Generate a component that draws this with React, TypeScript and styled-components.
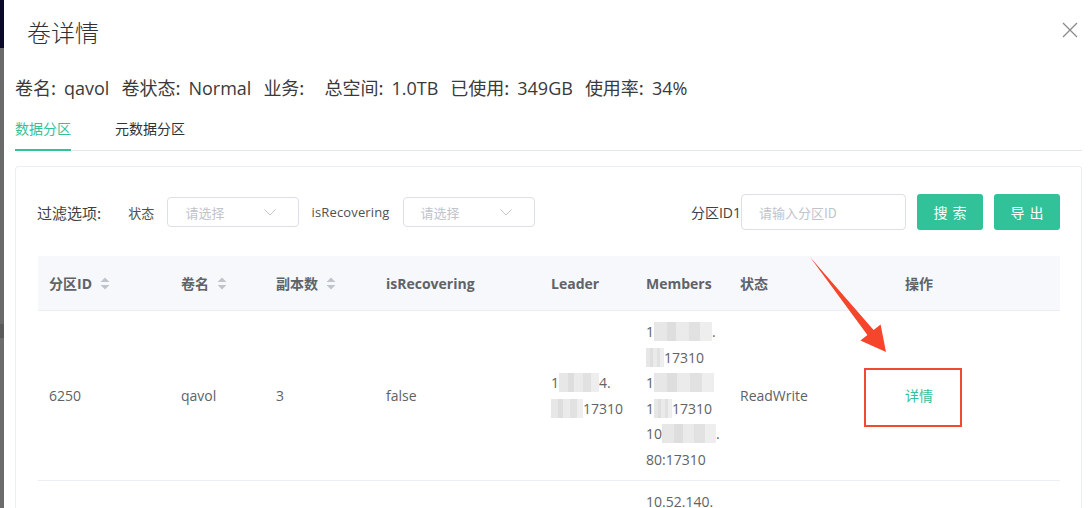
import React from "react";
import styled, { createGlobalStyle } from "styled-components";

const GREEN = "#31c29a";

const GlobalStyle = createGlobalStyle`
  html, body { margin: 0; padding: 0; background: #fff; }
  body {
    font-family: "Open Sans", "Noto Sans CJK SC", sans-serif;
    color: #606266;
  }
  * { box-sizing: border-box; }
`;

const Page = styled.div`
  position: relative;
  display: flex;
  width: 1089px;
  height: 508px;
  overflow: hidden;
`;

const Backdrop = styled.div`
  width: 4px;
  flex-shrink: 0;
  display: flex;
  flex-direction: column;
`;

const BackdropTop = styled.div`
  height: 48px;
  background: #0b0a26;
`;

const BackdropBottom = styled.div`
  flex: 1;
  background: linear-gradient(180deg, #6a6a6a 0 60%, #5a5a5a 60% 63%, #6c6c6c 63%);
`;

const Modal = styled.div`
  flex: 1;
  background: #fff;
  padding: 0 7px 0 11px;
  display: flex;
  flex-direction: column;
  & > * { flex-shrink: 0; }
`;

const ModalHeader = styled.div`
  height: 64px;
  display: flex;
  align-items: center;
  justify-content: space-between;
  padding: 0 4px 2px 12px;
`;

const Title = styled.div`
  font-family: "Noto Sans CJK SC", sans-serif;
  font-size: 24px;
  color: #303133;
  font-weight: 300;
`;

const CloseButton = styled.div`
  width: 16px;
  height: 16px;
  display: flex;
  margin-top: -2px;
`;

const InfoLine = styled.div`
  margin-top: 11px;
  line-height: 24px;
  font-size: 18px;
  color: #3a3a3a;
  display: flex;
  white-space: nowrap;
`;

const InfoItem = styled.span`
  margin-right: 12px;
`;

const InfoLabel = styled.span`
  font-family: "Noto Sans CJK SC", sans-serif;
`;

const InfoValue = styled.span`
  margin-left: 8px;
`;

const Tabs = styled.div`
  margin-top: 11px;
  display: flex;
  gap: 44px;
  border-bottom: 1px solid #e4e7ed;
`;

const Tab = styled.div<{ $active?: boolean }>`
  font-family: "Noto Sans CJK SC", sans-serif;
  font-size: 14px;
  line-height: 35px;
  padding-bottom: 3px;
  margin-bottom: -1px;
  color: ${(p) => (p.$active ? GREEN : "#303133")};
  border-bottom: 2px solid ${(p) => (p.$active ? GREEN : "transparent")};
`;

const Card = styled.div`
  margin-top: 15px;
  height: 400px;
  border: 1px solid #ebeef5;
  border-bottom: none;
  border-radius: 4px 4px 0 0;
  padding: 27px 21px 0 22px;
`;

const FilterBar = styled.div`
  display: flex;
  align-items: center;
  justify-content: space-between;
  height: 36px;
  margin-left: -1px;
`;

const FilterGroup = styled.div`
  display: flex;
  align-items: center;
`;

const FilterTitle = styled.span`
  font-family: "Noto Sans CJK SC", sans-serif;
  font-size: 15px;
  color: #404040;
  margin-right: 27px;
`;

const FilterLabel = styled.span`
  font-size: 13px;
  letter-spacing: 0.15px;
  color: #505050;
  margin-right: 13px;
`;

const Select = styled.div`
  width: 132px;
  height: 30px;
  border: 1px solid #dcdfe6;
  border-radius: 4px;
  display: flex;
  align-items: center;
  justify-content: space-between;
  padding: 0 22px 0 17px;
  margin-right: 12px;
`;

const Placeholder = styled.span`
  font-family: "Noto Sans CJK SC", sans-serif;
  font-size: 13px;
  color: #c0c4cc;
`;

const SearchGroup = styled.div`
  display: flex;
  align-items: center;
`;

const SearchLabel = styled.span`
  font-size: 14px;
  color: #404040;
`;

const Input = styled.div`
  width: 165px;
  height: 36px;
  border: 1px solid #dcdfe6;
  border-radius: 4px;
  display: flex;
  align-items: center;
  padding-left: 17px;
  margin-right: 11px;
`;

const Button = styled.div`
  height: 36px;
  width: 66px;
  border-radius: 3px;
  background: ${GREEN};
  color: #fff;
  font-family: "Noto Sans CJK SC", sans-serif;
  font-size: 14px;
  letter-spacing: 5px;
  padding-left: 5px;
  display: flex;
  align-items: center;
  justify-content: center;
  & + & {
    margin-left: 11px;
  }
`;

const Table = styled.div`
  margin-top: 26px;
  display: grid;
  grid-template-columns: 132px 95px 110px 165px 95px 94px 100px 180px 1fr;
`;

const HeadCell = styled.div<{ $center?: boolean }>`
  height: 55px;
  background: #f7f8fc;
  border-bottom: 1px solid #ebeef5;
  display: flex;
  align-items: center;
  justify-content: ${(p) => (p.$center ? "center" : "flex-start")};
  padding-left: ${(p) => (p.$center ? "0" : "11px")};
  font-size: 14px;
  font-weight: 700;
  color: #5f6368;
  white-space: nowrap;
  gap: 8px;
`;

const Cell = styled.div<{ $center?: boolean }>`
  border-bottom: 1px solid #ebeef5;
  display: flex;
  align-items: center;
  justify-content: ${(p) => (p.$center ? "center" : "flex-start")};
  padding: 8px 0 8px ${(p) => (p.$center ? "0" : "11px")};
  font-size: 14px;
  line-height: 25.5px;
  color: #606266;
  white-space: nowrap;
`;

const Lines = styled.div`
  display: flex;
  flex-direction: column;
`;

const Line = styled.div`
  display: flex;
  align-items: center;
  height: 25.5px;
`;

const Mask = styled.span<{ $w: number }>`
  display: inline-block;
  width: ${(p) => p.$w}px;
  height: 19px;
  background:
    linear-gradient(90deg, #e4e4e4 0 22%, #dadada 22% 38%, #e8e8e8 38% 60%, #dedede 60% 80%, #ececec 80%);
  opacity: 0.9;
`;

const LinkText = styled.span`
  font-family: "Noto Sans CJK SC", sans-serif;
  color: ${GREEN};
  font-size: 14px;
`;

const Annotation = styled.svg`
  position: absolute;
  left: 0;
  top: 0;
  pointer-events: none;
`;

const SortIcon = () => (
  <svg width="10" height="13" viewBox="0 0 10 13">
    <path d="M5 0.5 L9.5 5 H0.5 Z" fill="#c0c4cc" />
    <path d="M5 12.5 L9.5 8 H0.5 Z" fill="#c0c4cc" />
  </svg>
);

const Chevron = () => (
  <svg width="12" height="7" viewBox="0 0 12 7">
    <path d="M0.5 0.5 L6 6 L11.5 0.5" fill="none" stroke="#c0c4cc" strokeWidth="1" />
  </svg>
);

const info: [string, string][] = [
  ["卷名:", "qavol"],
  ["卷状态:", "Normal"],
  ["业务:", ""],
  ["总空间:", "1.0TB"],
  ["已使用:", "349GB"],
  ["使用率:", "34%"],
];

export default function App() {
  return (
    <>
      <GlobalStyle />
      <Page>
        <Backdrop>
          <BackdropTop />
          <BackdropBottom />
        </Backdrop>
        <Modal>
          <ModalHeader>
            <Title>卷详情</Title>
            <CloseButton>
              <svg width="16" height="16" viewBox="0 0 16 16">
                <path d="M1 1 L15 15 M15 1 L1 15" stroke="#8a8a8a" strokeWidth="1.3" />
              </svg>
            </CloseButton>
          </ModalHeader>
          <InfoLine>
            {info.map(([l, v]) => (
              <InfoItem key={l}>
                <InfoLabel>{l}</InfoLabel>
                <InfoValue>{v}</InfoValue>
              </InfoItem>
            ))}
          </InfoLine>
          <Tabs>
            <Tab $active>数据分区</Tab>
            <Tab>元数据分区</Tab>
          </Tabs>
          <Card>
            <FilterBar>
              <FilterGroup>
                <FilterTitle>过滤选项:</FilterTitle>
                <FilterLabel>状态</FilterLabel>
                <Select>
                  <Placeholder>请选择</Placeholder>
                  <Chevron />
                </Select>
                <FilterLabel>isRecovering</FilterLabel>
                <Select>
                  <Placeholder>请选择</Placeholder>
                  <Chevron />
                </Select>
              </FilterGroup>
              <SearchGroup>
                <SearchLabel>分区ID1</SearchLabel>
                <Input>
                  <Placeholder>请输入分区ID</Placeholder>
                </Input>
                <Button>搜索</Button>
                <Button>导出</Button>
              </SearchGroup>
            </FilterBar>
            <Table>
              <HeadCell>分区ID<SortIcon /></HeadCell>
              <HeadCell>卷名<SortIcon /></HeadCell>
              <HeadCell>副本数<SortIcon /></HeadCell>
              <HeadCell>isRecovering</HeadCell>
              <HeadCell>Leader</HeadCell>
              <HeadCell>Members</HeadCell>
              <HeadCell>状态</HeadCell>
              <HeadCell $center>操作</HeadCell>
              <HeadCell />

              <Cell>6250</Cell>
              <Cell>qavol</Cell>
              <Cell>3</Cell>
              <Cell>false</Cell>
              <Cell>
                <Lines>
                  <Line>1<Mask $w={40} />4.</Line>
                  <Line><Mask $w={32} />17310</Line>
                </Lines>
              </Cell>
              <Cell>
                <Lines>
                  <Line>1<Mask $w={58} />.</Line>
                  <Line><Mask $w={18} />17310</Line>
                  <Line>1<Mask $w={60} /></Line>
                  <Line>1<Mask $w={18} />17310</Line>
                  <Line>10<Mask $w={54} />.</Line>
                  <Line>80:17310</Line>
                </Lines>
              </Cell>
              <Cell>ReadWrite</Cell>
              <Cell $center>
                <LinkText>详情</LinkText>
              </Cell>
              <Cell />

              <Cell />
              <Cell />
              <Cell />
              <Cell />
              <Cell />
              <Cell>
                <Lines>
                  <Line>10.52.140.</Line>
                </Lines>
              </Cell>
              <Cell />
              <Cell />
              <Cell />
            </Table>
          </Card>
        </Modal>
        <Annotation width="1089" height="508" viewBox="0 0 1089 508">
          <polygon
            points="810,257 873.6,330 880.6,324.4 886,352 860.4,340.6 867.4,335"
            fill="#f5452a"
          />
          <rect x="865" y="369" width="96" height="57" fill="none" stroke="#f04a30" strokeWidth="2" />
        </Annotation>
      </Page>
    </>
  );
}
